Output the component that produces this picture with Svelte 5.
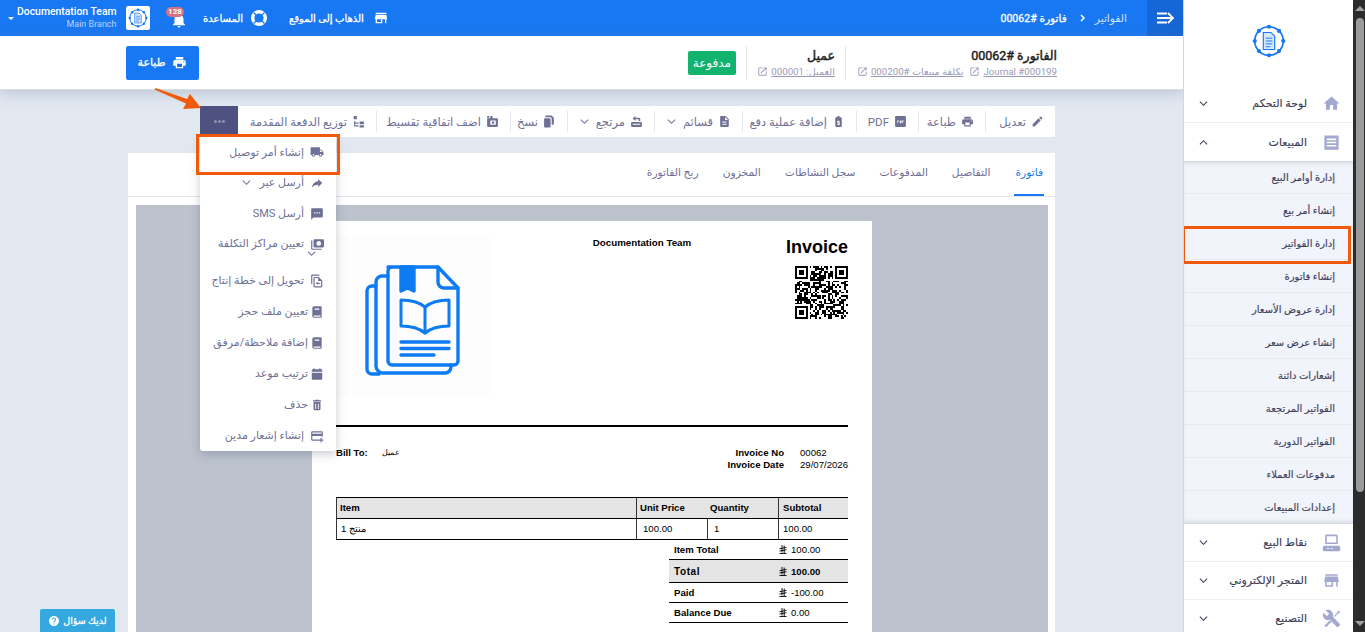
<script>
  const icons = {
    truck: "M20 8h-3V4H3c-1.1 0-2 .9-2 2v11h2c0 1.66 1.34 3 3 3s3-1.34 3-3h6c0 1.66 1.34 3 3 3s3-1.34 3-3h2v-5l-3-4zM6 18.5c-.83 0-1.5-.67-1.5-1.5s.67-1.5 1.5-1.5 1.5.67 1.5 1.5-.67 1.5-1.5 1.5zm13.5-9l1.96 2.5H17V9.5h2.5zm-1.5 9c-.83 0-1.5-.67-1.5-1.5s.67-1.5 1.5-1.5 1.5.67 1.5 1.5-.67 1.5-1.5 1.5z",
    share: "M14 9V5l7 7-7 7v-4.1c-5 0-8.5 1.6-11 5.1 1-5 4-10 11-11z",
    sms: "M20 2H4c-1.1 0-2 .9-2 2v18l4-4h14c1.1 0 2-.9 2-2V4c0-1.1-.9-2-2-2zM9 11H7V9h2v2zm4 0h-2V9h2v2zm4 0h-2V9h2v2z",
    money: "M4 6H2v14c0 1.1.9 2 2 2h16v-2H4V6zm18-2H8c-1.1 0-2 .9-2 2v10c0 1.1.9 2 2 2h14c1.1 0 2-.9 2-2V6c0-1.1-.9-2-2-2zm-7 11c-2.2 0-4-1.8-4-4s1.8-4 4-4 4 1.8 4 4-1.8 4-4 4z",
    convert: "M16 1H4c-1.1 0-2 .9-2 2v14h2V3h12V1zm-1 4H8c-1.1 0-2 .9-2 2v14c0 1.1.9 2 2 2h11c1.1 0 2-.9 2-2V11l-6-6zm4 16H8V7h6v5h5v9zm-9-5 3-3v2h4v2h-4v2z",
    book: "M18 2H7C5.3 2 4 3.3 4 5v14c0 1.7 1.3 3 3 3h11c1.1 0 2-.9 2-2V4c0-1.1-.9-2-2-2zM8 6h8v2H8V6zm10 14H7c-.6 0-1-.4-1-1s.4-1 1-1h11v2z",
    calendar: "M6 2h2v2h8V2h2v2h1c1.1 0 2 .9 2 2v2H3V6c0-1.1.9-2 2-2h1V2zM3 10h18v10c0 1.1-.9 2-2 2H5c-1.1 0-2-.9-2-2V10z",
    trash: "M6 19c0 1.1.9 2 2 2h8c1.1 0 2-.9 2-2V7H6v12zm3-9h1.5v9H9v-9zm4.5 0H15v9h-1.5v-9zM19 4h-3.5l-1-1h-5l-1 1H5v2h14V4z",
    card: "M20 4H4c-1.1 0-2 .9-2 2v12c0 1.1.9 2 2 2h11v-2H4v-6h16v1h2V6c0-1.1-.9-2-2-2zm0 4H4V6h16v2zm0 7v3h3v2h-3v3h-2v-3h-3v-2h3v-3h2z",
    pencil: "M3 17.25V21h3.75L17.81 9.94l-3.75-3.75L3 17.25zM20.71 7.04c.39-.39.39-1.02 0-1.41l-2.34-2.34c-.39-.39-1.02-.39-1.41 0l-1.83 1.83 3.75 3.75 1.83-1.83z",
    print: "M19 8H5c-1.66 0-3 1.34-3 3v6h4v4h12v-4h4v-6c0-1.66-1.34-3-3-3zm-3 11H8v-5h8v5zm3-7c-.55 0-1-.45-1-1s.45-1 1-1 1 .45 1 1-.45 1-1 1zm-1-9H6v4h12V3z",
    pdf: "M20 2H4c-1.1 0-2 .9-2 2v16c0 1.1.9 2 2 2h16c1.1 0 2-.9 2-2V4c0-1.1-.9-2-2-2zM6 10h3v2.5H7V15H6v-5zm5 0h2c.6 0 1 .4 1 1v3c0 .6-.4 1-1 1h-2v-5zm4 0h3v1h-2v1h2v1h-2v2h-1v-5z",
    payment: "M14 2h-4v2H8C6.9 4 6 4.9 6 6v14c0 1.1.9 2 2 2h8c1.1 0 2-.9 2-2V6c0-1.1-.9-2-2-2h-2V2zm-1 8v1h1.5v1.5H11v1h2.5c.5 0 1 .5 1 1V17c0 .5-.5 1-1 1H13v1h-2v-1H9.5v-1.5H13v-1h-2.5c-.5 0-1-.5-1-1V12c0-.5.5-1 1-1h.5v-1h2z",
    doc: "M14 2H6c-1.1 0-2 .9-2 2v16c0 1.1.9 2 2 2h12c1.1 0 2-.9 2-2V8l-6-6zm2 16H8v-2h8v2zm0-4H8v-2h8v2zm-3-5V3.5L18.5 9H13z",
    returns: "M4 13h16c1.1 0 2 .9 2 2v5c0 1.1-.9 2-2 2H4c-1.1 0-2-.9-2-2v-5c0-1.1.9-2 2-2zm1 3v2h14v-2H5zM10 2v3h6c1.7 0 3 1.3 3 3v3h-3V8h-6v3L5 6.5 10 2z",
    copy: "M16 1H6C4.9 1 4 1.9 4 3v1h9c1.7 0 3 1.3 3 3v11h2c1.1 0 2-.9 2-2V5l-4-4zM12 6H4C2.9 6 2 6.9 2 8v13c0 1.1.9 2 2 2h8c1.1 0 2-.9 2-2V8c0-1.1-.9-2-2-2z",
    install: "M20 6h-8V2H8v4H4c-1.1 0-2 .9-2 2v12c0 1.1.9 2 2 2h16c1.1 0 2-.9 2-2V8c0-1.1-.9-2-2-2zM2 2h4v3H2V2zm6 8h10v8H8v-8zm3 2v4h4v-4h-4z",
    split: "M3 2h6v6H3V2zm1 9h2v3h6v2H6v3h6v2H4V11zm10 1h8v5h-8v-5zm0 7h8v4h-8v-4z",
    home: "M10 20v-6h4v6h5v-8h3L12 3 2 12h3v8z",
    sales: "M3 3h18v18H3V3zm3 4v2h12V7H6zm0 4v2h12v-2H6zm0 4v2h12v-2H6z",
    pos: "M6 2h12c1.1 0 2 .9 2 2v10H4V4c0-1.1.9-2 2-2zm0 2v8h12V4H6zM3 16h18c1.1 0 2 .9 2 2v3c0 1.1-.9 2-2 2H3c-1.1 0-2-.9-2-2v-3c0-1.1.9-2 2-2zm3 3v1h3v-1H6zm5 0v1h3v-1h-3z",
    store: "M20 4H4v2h16V4zm1 10v-2l-1-5H4l-1 5v2h1v6h10v-6h4v6h2v-6h1zm-9 4H6v-4h6v4z",
    tools: "M22.7 19l-9.1-9.1c.9-2.3.4-5-1.5-6.9-2-2-5-2.4-7.4-1.3L9 6 6 9 1.6 4.7C.4 7.1.9 10.1 2.9 12.1c1.9 1.9 4.6 2.4 6.9 1.5l9.1 9.1c.4.4 1 .4 1.4 0l2.3-2.3c.5-.4.5-1.1.1-1.4zM3 21l7.5-7.5 2 2L5 23l-2-2zM15 9l4-4 2-3 2 2-3 2-4 4-1-1z",
    open: "M19 19H5V5h7V3H5c-1.11 0-2 .9-2 2v14c0 1.1.89 2 2 2h14c1.1 0 2-.9 2-2v-7h-2v7zM14 3v2h3.59l-9.83 9.83 1.41 1.41L19 6.41V10h2V3h-7z",
    bell: "M12 22c1.1 0 2-.9 2-2h-4c0 1.1.9 2 2 2zm6-6v-5c0-3.07-1.63-5.64-4.5-6.32V4c0-.83-.67-1.5-1.5-1.5s-1.5.67-1.5 1.5v.68C7.64 5.36 6 7.92 6 11v5l-2 2v1h16v-1l-2-2z",
    help: "M12 2C6.48 2 2 6.48 2 12s4.48 10 10 10 10-4.48 10-10S17.52 2 12 2zm1 17h-2v-2h2v2zm2.07-7.75l-.9.92C13.45 12.9 13 13.5 13 15h-2v-.5c0-1.1.45-2.1 1.17-2.83l1.24-1.26c.37-.36.59-.86.59-1.41 0-1.1-.9-2-2-2s-2 .9-2 2H8c0-2.21 1.79-4 4-4s4 1.79 4 4c0 .88-.36 1.68-.93 2.25z"
  };

  const toolbar = [
    { label: "تعديل", icon: "pencil", w: 69 },
    { label: "طباعة", icon: "print", w: 67 },
    { label: "PDF", icon: "pdf", w: 62 },
    { label: "إضافة عملية دفع", icon: "payment", w: 114 },
    { label: "قسائم", icon: "doc", caret: true, w: 88 },
    { label: "مرتجع", icon: "returns", caret: true, w: 87 },
    { label: "نسخ", icon: "copy", w: 57 },
    { label: "اضف اتفاقية تقسيط", icon: "install", w: 134 },
    { label: "توزيع الدفعة المقدمة", icon: "split", w: 139 }
  ];

  const menu = [
    { label: "إنشاء أمر توصيل", icon: "truck", boxed: true },
    { label: "أرسل عبر", icon: "share", caret: true },
    { label: "أرسل SMS", icon: "sms" },
    { label: "تعيين مراكز التكلفة", icon: "money", below: true },
    { label: "تحويل إلى خطة إنتاج", icon: "convert" },
    { label: "تعيين ملف حجز", icon: "book", far: true },
    { label: "إضافة ملاحظة/مرفق", icon: "book", far: true },
    { label: "ترتيب موعد", icon: "calendar", far: true },
    { label: "حذف", icon: "trash", far: true },
    { label: "إنشاء إشعار مدين", icon: "card" }
  ];

  const tabs = ["فاتورة", "التفاصيل", "المدفوعات", "سجل النشاطات", "المخزون", "ربح الفاتورة"];

  const subItems = [
    "إدارة أوامر البيع", "إنشاء أمر بيع", "إدارة الفواتير", "إنشاء فاتورة", "إدارة عروض الأسعار",
    "إنشاء عرض سعر", "إشعارات دائنة", "الفواتير المرتجعة", "الفواتير الدورية", "مدفوعات العملاء", "إعدادات المبيعات"
  ];

  const totals = [
    { label: "Item Total", value: "100.00" },
    { label: "Total", value: "100.00", grand: true },
    { label: "Paid", value: "-100.00" },
    { label: "Balance Due", value: "0.00" }
  ];

  // qr code: finder squares plus a fixed pseudo random fill
  const qrSize = 29;
  const qrCells = [];
  let seed = 73;
  for (let y = 0; y < qrSize; y++) {
    for (let x = 0; x < qrSize; x++) {
      seed = (seed * 1103515245 + 12345) % 2147483648;
      const inFinder = (x < 8 && y < 8) || (x > 20 && y < 8) || (x < 8 && y > 20);
      if (!inFinder && seed % 100 < 52) qrCells.push([x, y]);
    }
  }
  const finders = [[0, 0], [22, 0], [0, 22]];

  const logoDots = [0, 45, 90, 135, 180, 225, 270, 315].map((a) => [
    20 + 15 * Math.cos((a * Math.PI) / 180),
    20 + 15 * Math.sin((a * Math.PI) / 180)
  ]);
</script>

{#snippet icon(name, size)}
  <svg class="icon" width={size} height={size} viewBox="0 0 24 24" fill="currentColor"><path fill-rule="evenodd" d={icons[name]} /></svg>
{/snippet}

{#snippet chevron(up)}
  <svg class="chevron" width="9" height="9" viewBox="0 0 10 10" fill="none" stroke="currentColor" stroke-width="1.2"><path d={up ? "M1 7l4-4 4 4" : "M1 3l4 4 4-4"} /></svg>
{/snippet}

{#snippet logo(size)}
  <svg width={size} height={size} viewBox="0 0 40 40" fill="none">
    <circle cx="20" cy="20" r="15" stroke="#1877f2" stroke-width="1.8" />
    {#each logoDots as d}
      <circle cx={d[0]} cy={d[1]} r="2.200" fill="#1877f2" />
    {/each}
    <path d="M14 11h8l4 4v14H14z" fill="#d5e6fd" stroke="#1877f2" stroke-width="1.2" />
    <path d="M16.500 17h7M16.500 20h7M16.500 23h7M16.500 26h5" stroke="#1877f2" stroke-width="1" />
  </svg>
{/snippet}

{#snippet riyal()}
  <svg class="riyal" width="8" height="9" viewBox="0 0 8 9" fill="none" stroke="currentColor" stroke-width="0.900"><path d="M3 0v7.500M5.200 0.500v7.500M0.500 3.700l7-1.300M0.500 6l7-1.300M0.500 8.500h7" /></svg>
{/snippet}

<div class="app">
  <div class="main">
    <header class="topbar">
      <div class="top-left">
        <div class="account">
          <span class="caret"></span>
          <div class="account-text">
            <div class="team">Documentation Team</div>
            <div class="branch">Main Branch</div>
          </div>
        </div>
        <div class="logo-box">{@render logo(22)}</div>
        <div class="bell">
          {@render icon("bell", 18)}
          <span class="count">128</span>
        </div>
        <div class="top-link help-link">
          <span dir="rtl">المساعدة</span>
          <svg class="icon" width="18" height="18" viewBox="0 0 18 18" fill="none"><circle cx="9" cy="9" r="6.300" stroke="#fff" stroke-width="3.400" /><path d="M3.500 3.500l3 3M14.500 3.500l-3 3M3.500 14.500l3-3M14.500 14.500l-3-3" stroke="#1877f2" stroke-width="1.300" /></svg>
        </div>
        <div class="top-link">
          <span dir="rtl">الذهاب إلى الموقع</span>
          {@render icon("store", 16)}
        </div>
      </div>
      <div class="top-right">
        <span class="crumb-current" dir="rtl">فاتورة #00062</span>
        <svg class="crumb-sep" width="6" height="8" viewBox="0 0 6 8" fill="none" stroke="#fff" stroke-width="1.600"><path d="M1 1l3 3-3 3" /></svg>
        <span class="crumb" dir="rtl">الفواتير</span>
        <div class="burger">
          <svg width="17" height="12" viewBox="0 0 17 12" fill="none" stroke="#fff" stroke-width="1.800"><path d="M0 1.500h10M0 6h15M0 10.500h10M11 1l5 5-5 5" /></svg>
        </div>
      </div>
    </header>

    <section class="subhead">
      <button class="print-btn">
        <span dir="rtl">طباعة</span>
        {@render icon("print", 15)}
      </button>
      <div class="sub-right">
        <span class="badge" dir="rtl">مدفوعة</span>
        <div class="sub-block client">
          <div class="sub-title" dir="rtl">عميل</div>
          <div class="sub-links">
            {@render icon("open", 11)}
            <span class="sub-link" dir="rtl">العميل: 000001</span>
          </div>
        </div>
        <div class="sub-block">
          <div class="sub-title" dir="rtl">الفاتورة #00062</div>
          <div class="sub-links">
            {@render icon("open", 11)}
            <span class="sub-link" dir="rtl">تكلفة مبيعات #000200</span>
            {@render icon("open", 11)}
            <span class="sub-link">Journal #000199</span>
          </div>
        </div>
      </div>
    </section>

    <div class="content">
      <div class="toolbar">
        <div class="more">
          <span class="dots"></span>
          <div class="menu">
            {#each menu as m}
              <div class="menu-row" class:tall={m.below} class:far={m.far}>
                {#if m.caret}{@render chevron(false)}{/if}
                <span class="menu-label" dir="rtl">{m.label}</span>
                {@render icon(m.icon, 14)}
                {#if m.below}<span class="below">{@render chevron(false)}</span>{/if}
                {#if m.boxed}<span class="mark mark-menu"></span>{/if}
              </div>
            {/each}
          </div>
        </div>
        <div class="tools">
          {#each [...toolbar].reverse() as t}
            <div class="tool" style="width: {t.w}px">
              {#if t.caret}{@render chevron(false)}{/if}
              <span dir="rtl">{t.label}</span>
              {@render icon(t.icon, 13)}
            </div>
          {/each}
        </div>
      </div>

      <div class="card">
        <nav class="tabs" dir="rtl">
          {#each tabs as tab, i}
            <span class="tab" class:active={i === 0}>{tab}</span>
          {/each}
        </nav>
        <div class="preview">
          <div class="sheet">
            <div class="sheet-head">
              <svg class="book-logo" width="154" height="160" viewBox="0 0 154 160" fill="none" stroke="#0d7bf2" stroke-width="3.400" stroke-linejoin="round" stroke-linecap="round">
                <path d="M52 31h50l20 21v73a4 4 0 0 1-4 4H56a4 4 0 0 1-4-4V35a4 4 0 0 1 4-4z" />
                <path d="M52 40h-6a6 6 0 0 0-6 6v84a7 7 0 0 0 7 7h62a6 6 0 0 0 6-6v-2" />
                <path d="M40 50h-4a5 5 0 0 0-5 5v78a5 5 0 0 0 5 5h7" />
                <path d="M102 31v15a6 6 0 0 0 6 6h14" />
                <path d="M65 31h13v24l-6.500-3-6.500 3z" fill="#0d7bf2" />
                <path d="M65 64c10 0 18 2 24 7 6-5 14-7 24-7v26c-10 0-18 2-24 7-6-5-14-7-24-7z" stroke-width="3" />
                <path d="M89 71v26" stroke-width="3" />
                <path d="M65 106h48M65 112.500h48M65 119h33" />
              </svg>
              <div class="company">Documentation Team</div>
              <div class="doc-title">
                <div class="invoice-word">Invoice</div>
                <svg class="qr" width="53" height="53" viewBox="0 0 29 29" shape-rendering="crispEdges">
                  {#each finders as f}
                    <path d="M{f[0]} {f[1]}h7v7h-7z M{f[0] + 1} {f[1] + 1}v5h5v-5z" fill-rule="evenodd" />
                    <rect x={f[0] + 2} y={f[1] + 2} width="3" height="3" />
                  {/each}
                  {#each qrCells as c}
                    <rect x={c[0]} y={c[1]} width="1" height="1" />
                  {/each}
                </svg>
              </div>
            </div>
            <div class="rule"></div>
            <div class="bill">
              <div class="bill-to"><b>Bill To:</b><span dir="rtl">عميل</span></div>
              <div class="bill-meta">
                <b>Invoice No</b><span>00062</span>
                <b>Invoice Date</b><span>29/07/2026</span>
              </div>
            </div>
            <div class="items">
              <div class="items-row items-head">
                <b class="c-item">Item</b>
                <b class="c-price">Unit Price</b>
                <b class="c-qty">Quantity</b>
                <b class="c-sub">Subtotal</b>
              </div>
              <div class="items-row">
                <span class="c-item" dir="rtl">منتج 1</span>
                <span class="c-price">100.00</span>
                <span class="c-qty">1</span>
                <span class="c-sub">100.00</span>
              </div>
            </div>
            <div class="totals">
              {#each totals as row}
                <div class="total-row" class:grand={row.grand}>
                  <b>{row.label}</b>
                  <span class="amount">{@render riyal()}{row.value}</span>
                </div>
              {/each}
            </div>
          </div>
        </div>
      </div>
    </div>

    <svg class="arrow" width="50" height="24" viewBox="0 0 50 24" fill="#f15a0a"><path d="M0.500 1.500L1.500 0 33 11l3-5 11 14-18 1 3-5.500z" /></svg>
    <div class="question">{@render icon("help", 12)}<span dir="rtl">لديك سؤال</span></div>
  </div>

  <aside class="sidebar">
    <div class="side-logo">{@render logo(38)}</div>
    <div class="side-row"><span>{@render chevron(false)}</span><span class="side-label" dir="rtl">لوحة التحكم</span>{@render icon("home", 19)}</div>
    <div class="side-row open"><span>{@render chevron(true)}</span><span class="side-label" dir="rtl">المبيعات</span>{@render icon("sales", 19)}</div>
    <div class="sub-list">
      {#each subItems as s, i}
        <div class="sub-item" dir="rtl">
          {s}
          {#if i === 2}<span class="mark mark-side"></span>{/if}
        </div>
      {/each}
    </div>
    <div class="side-row"><span>{@render chevron(false)}</span><span class="side-label" dir="rtl">نقاط البيع</span>{@render icon("pos", 19)}</div>
    <div class="side-row"><span>{@render chevron(false)}</span><span class="side-label" dir="rtl">المتجر الإلكتروني</span>{@render icon("store", 19)}</div>
    <div class="side-row"><span>{@render chevron(false)}</span><span class="side-label" dir="rtl">التصنيع</span>{@render icon("tools", 19)}</div>
  </aside>

  <div class="scrollbar">
    <span class="arrow-up"></span>
    <span class="thumb"></span>
    <span class="arrow-down"></span>
  </div>
</div>

<style>
  :global(body) {
    margin: 0;
    overflow: hidden;
  }

  .app {
    display: flex;
    width: 1365px;
    height: 632px;
    overflow: hidden;
    font-family: "Roboto", "DejaVu Sans", sans-serif;
    background: #e2e8f0;
  }

  .main {
    position: relative;
    width: 1183px;
    flex-shrink: 0;
    overflow: hidden;
    border-right: 1px solid #cfd6df;
  }

  .icon {
    flex-shrink: 0;
    display: block;
  }

  .chevron {
    flex-shrink: 0;
    display: block;
  }

  .topbar {
    height: 36px;
    background: #1877f2;
    color: #fff;
    display: flex;
    justify-content: space-between;
    align-items: center;
    padding-left: 8px;
  }

  .top-left,
  .top-right {
    display: flex;
    align-items: center;
    height: 100%;
  }

  .account {
    display: flex;
    align-items: center;
    gap: 3px;
    width: 109px;
  }

  .caret {
    border: 3px solid transparent;
    border-top-color: #fff;
    margin-top: 3px;
  }

  .account-text {
    text-align: right;
    line-height: 12px;
  }

  .team {
    font-size: 10.400px;
    font-weight: 500;
    white-space: nowrap;
  }

  .branch {
    font-size: 9px;
    color: #bcd6fb;
  }

  .logo-box {
    width: 24px;
    height: 24px;
    margin-left: 9px;
    background: #fff;
    border-radius: 2px;
    display: flex;
    align-items: center;
    justify-content: center;
  }

  .bell {
    position: relative;
    margin-left: 20px;
    width: 18px;
    height: 22px;
    padding-top: 4px;
    box-sizing: border-box;
  }

  .count {
    position: absolute;
    top: 0;
    left: -4px;
    width: 18px;
    height: 10px;
    border-radius: 6px;
    background: #dc6f7c;
    font-size: 8px;
    font-weight: 700;
    line-height: 10px;
    text-align: center;
  }

  .top-link {
    display: flex;
    align-items: center;
    gap: 9px;
    font-size: 10px;
    -webkit-text-stroke: 0.3px #fff;
    margin-left: 21px;
    white-space: nowrap;
  }

  .help-link {
    width: 65px;
    justify-content: flex-end;
    gap: 7px;
    margin-left: 15px;
  }

  .crumb-current {
    font-size: 10.600px;
    -webkit-text-stroke: 0.3px #fff;
  }

  .crumb-sep {
    margin: 0 9px 0 13px;
  }

  .crumb {
    font-size: 10.700px;
    color: #cfe1fb;
  }

  .burger {
    width: 36px;
    height: 100%;
    margin-left: 20px;
    background: #1566d6;
    display: flex;
    align-items: center;
    justify-content: center;
  }

  .subhead {
    height: 54px;
    box-sizing: border-box;
    background: #fff;
    border-bottom: 1px solid #d8dde6;
    box-shadow: 0 3px 14px rgba(110, 125, 155, 0.35);
    position: relative;
    display: flex;
    justify-content: space-between;
    align-items: center;
    padding: 0 126px;
  }

  .print-btn {
    width: 73px;
    height: 34px;
    border: none;
    border-radius: 2px;
    background: #1877f2;
    color: #fff;
    font: 400 11px "Roboto", "DejaVu Sans", sans-serif;
    -webkit-text-stroke: 0.3px #fff;
    display: flex;
    align-items: center;
    justify-content: center;
    gap: 7px;
  }

  .sub-right {
    display: flex;
    align-items: center;
  }

  .badge {
    width: 48px;
    height: 24px;
    border-radius: 2px;
    background: #12b26f;
    color: #fff;
    font-size: 12px;
    line-height: 24px;
    text-align: center;
    margin-right: 10px;
  }

  .sub-block {
    height: 34px;
    display: flex;
    flex-direction: column;
    align-items: flex-end;
    justify-content: center;
    gap: 3px;
    color: #9a9ab8;
  }

  .client {
    border-left: 1px solid #e4e7ee;
    border-right: 1px solid #e4e7ee;
    padding: 0 10px 0 11px;
    width: 77px;
    margin-right: 11px;
  }

  .sub-title {
    font-size: 12.500px;
    color: #222;
    -webkit-text-stroke: 0.45px #222;
  }

  .sub-links {
    display: flex;
    align-items: center;
    gap: 3px;
  }

  .sub-links .sub-link + :global(.icon) {
    margin-left: 3px;
  }

  .sub-link {
    font-size: 9.700px;
    text-decoration: underline;
    white-space: nowrap;
  }

  .content {
    width: 927px;
    margin: 16px 0 0 128px;
  }

  .toolbar {
    margin-left: 72px;
    height: 31px;
    background: #fff;
    display: flex;
    justify-content: space-between;
    position: relative;
    z-index: 3;
  }

  .more {
    width: 38px;
    height: 31px;
    flex-shrink: 0;
    background: #4f5280;
    position: relative;
    display: flex;
    align-items: center;
    justify-content: center;
  }

  .dots {
    width: 3px;
    height: 3px;
    border-radius: 50%;
    background: #8f91b0;
    box-shadow: -4px 0 #8f91b0, 4px 0 #8f91b0;
  }

  .menu {
    position: absolute;
    top: 31px;
    left: 0;
    width: 136px;
    background: #fff;
    border-radius: 0 0 3px 3px;
    box-shadow: 0 3px 10px rgba(60, 70, 100, 0.28);
  }

  .menu-row {
    position: relative;
    height: 31px;
    box-sizing: border-box;
    display: flex;
    align-items: center;
    justify-content: flex-end;
    gap: 6px;
    padding-right: 12px;
    font-size: 11px;
    color: #6f7096;
    white-space: nowrap;
  }

  .menu-row:first-child {
    height: 30px;
  }

  .menu-row :global(.chevron) {
    margin-right: 2px;
  }

  .far {
    gap: 2px;
  }

  .tall {
    height: 36px;
    align-items: flex-start;
    padding-top: 8px;
  }

  .below {
    position: absolute;
    right: 20px;
    top: 20px;
  }

  .below :global(.chevron) {
    margin: 0;
  }

  .mark {
    position: absolute;
    border: 3px solid #f15a0a;
    box-sizing: border-box;
    pointer-events: none;
  }

  .mark-menu {
    left: -4px;
    top: -3px;
    width: 144px;
    height: 41px;
  }

  .tools {
    display: flex;
    align-items: center;
  }

  .tool {
    display: flex;
    align-items: center;
    justify-content: flex-end;
    gap: 5px;
    height: 21px;
    padding-right: 11px;
    box-sizing: border-box;
    font-size: 11.500px;
    color: #6f7096;
    white-space: nowrap;
    border-right: 1px solid #e2e7ef;
  }

  .tool:last-child {
    border-right: none;
  }

  .tool :global(.chevron) {
    margin-right: 2px;
  }

  .card {
    background: #fff;
    margin-top: 16px;
  }

  .tabs {
    height: 43px;
    display: flex;
    align-items: center;
    gap: 24px;
    padding: 0 11px;
    border-bottom: 1px solid #e2e6ee;
    font-size: 10.700px;
    color: #6f7096;
  }

  .tab {
    height: 43px;
    box-sizing: border-box;
    line-height: 40px;
  }

  .tab.active {
    color: #1877f2;
    border-bottom: 2px solid #1877f2;
    padding: 0 1px;
  }

  .preview {
    margin: 8px 7px 0 8px;
    height: 428px;
    background: #bcc3cd;
    padding-top: 16px;
    box-sizing: border-box;
  }

  .sheet {
    width: 512px;
    margin-left: 176px;
    padding: 0 24px;
    height: 412px;
    background: #fff;
    font-family: "Liberation Sans", Arial, sans-serif;
    color: #000;
    font-size: 9.600px;
  }

  .sheet-head {
    display: flex;
    height: 204px;
    padding-top: 15px;
    box-sizing: border-box;
    position: relative;
  }

  .book-logo {
    background: #fdfdfd;
    flex-shrink: 0;
  }

  .company {
    flex: 1;
    text-align: center;
    font-size: 9.750px;
    font-weight: 700;
    padding: 1px 0 0 46px;
  }

  .doc-title {
    width: 100px;
    text-align: right;
  }

  .invoice-word {
    font-size: 18px;
    font-weight: 700;
    line-height: 22px;
  }

  .qr {
    margin-top: 8px;
  }

  .rule {
    height: 2px;
    background: #000;
  }

  .bill {
    display: flex;
    justify-content: space-between;
    margin-top: 20px;
    height: 50px;
    line-height: 11.500px;
  }

  .bill-to {
    display: flex;
    gap: 14px;
  }

  .bill-to span {
    font-size: 8px;
  }

  .bill-meta {
    display: grid;
    grid-template-columns: auto 48px;
    grid-auto-rows: 12px;
    align-content: start;
    column-gap: 16px;
    text-align: right;
  }

  .bill-meta span {
    text-align: left;
  }

  .items {
    border-top: 1px solid #000;
    border-bottom: 1px solid #000;
    border-left: 1px solid #333;
  }

  .items-row {
    display: grid;
    grid-template-columns: 299px 71px 71px 70px;
    height: 20px;
    align-items: center;
  }

  .items-row span,
  .items-row b {
    height: 100%;
    line-height: 20px;
    padding-left: 3px;
    box-sizing: border-box;
  }

  .items-row .c-price {
    padding-left: 6px;
    border-left: 1px solid #333;
  }

  .items-row .c-qty {
    padding-left: 6px;
    border-left: 1px solid #333;
  }

  .items-row .c-sub {
    padding-left: 4px;
    border-left: 1px solid #333;
  }

  .items-row b.c-qty {
    border-left: none;
    padding-left: 3px;
  }

  .items-row b.c-price {
    padding-left: 3px;
  }

  .items-row span.c-item {
    text-align: right;
    padding: 0 270px 0 0;
    white-space: nowrap;
  }

  .items-head {
    height: 21px;
    box-sizing: border-box;
    background: #e4e4e4;
    border-bottom: 1px solid #000;
  }

  .totals {
    width: 179px;
    margin-left: 333px;
  }

  .total-row {
    display: grid;
    grid-template-columns: 105px 1fr;
    height: 20px;
    align-items: center;
    padding-left: 5px;
    border-bottom: 1px solid #000;
    box-sizing: border-box;
  }

  .grand {
    height: 23px;
    background: #e4e4e4;
  }

  .grand b {
    font-size: 10px;
    letter-spacing: 0.6px;
  }

  .grand .amount {
    font-weight: 700;
  }

  .amount {
    display: flex;
    align-items: center;
    gap: 4px;
  }

  .riyal {
    flex-shrink: 0;
  }

  .arrow {
    position: absolute;
    left: 154px;
    top: 88px;
    z-index: 4;
  }

  .question {
    position: absolute;
    left: 40px;
    top: 609px;
    width: 75px;
    height: 23px;
    border-radius: 2px 2px 0 0;
    background: #35a8e0;
    color: #fff;
    font-size: 9.500px;
    -webkit-text-stroke: 0.3px #fff;
    display: flex;
    align-items: center;
    justify-content: center;
    gap: 3px;
    z-index: 5;
  }

  .sidebar {
    width: 169px;
    flex-shrink: 0;
    background: #fff;
    overflow: hidden;
  }

  .side-logo {
    height: 85px;
    display: flex;
    justify-content: center;
    padding-top: 22px;
    box-sizing: border-box;
  }

  .side-row {
    height: 38px;
    box-sizing: border-box;
    display: flex;
    align-items: center;
    padding: 0 12px 0 15px;
    border-bottom: 1px solid #eef0f4;
    color: #3b3b55;
    flex-shrink: 0;
  }

  .side-row > :global(.icon) {
    color: #a3a8cf;
    margin-left: 15px;
  }

  .side-label {
    flex: 1;
    text-align: right;
    font-size: 11px;
    -webkit-text-stroke: 0.15px #3b3b55;
    white-space: nowrap;
  }

  .open {
    border-bottom: none;
  }

  .sub-list {
    background: #f1f4fa;
    box-shadow: inset 0 5px 5px -4px rgba(70, 80, 110, 0.25), inset 0 -5px 5px -4px rgba(70, 80, 110, 0.25);
  }

  .sub-item {
    position: relative;
    height: 33px;
    box-sizing: border-box;
    line-height: 33px;
    padding-right: 18px;
    font-size: 10px;
    -webkit-text-stroke: 0.15px #3f3f5c;
    color: #3f3f5c;
    border-bottom: 1px solid #e6e9f0;
  }

  .sub-item:last-child {
    border-bottom: none;
  }

  .mark-side {
    left: -2px;
    right: 2px;
    top: -1px;
    height: 38px;
    z-index: 2;
  }

  .scrollbar {
    position: relative;
    width: 13px;
    flex-shrink: 0;
    background: #2c2c2c;
  }

  .arrow-up,
  .arrow-down {
    position: absolute;
    left: 2px;
    border: 5px solid transparent;
  }

  .arrow-up {
    top: 1px;
    border-bottom-color: #a0a0a0;
  }

  .arrow-down {
    bottom: 1px;
    border-top-color: #a0a0a0;
  }

  .thumb {
    position: absolute;
    left: 3px;
    top: 18px;
    width: 8px;
    height: 474px;
    border-radius: 4px;
    background: #9b9b9b;
  }
</style>
